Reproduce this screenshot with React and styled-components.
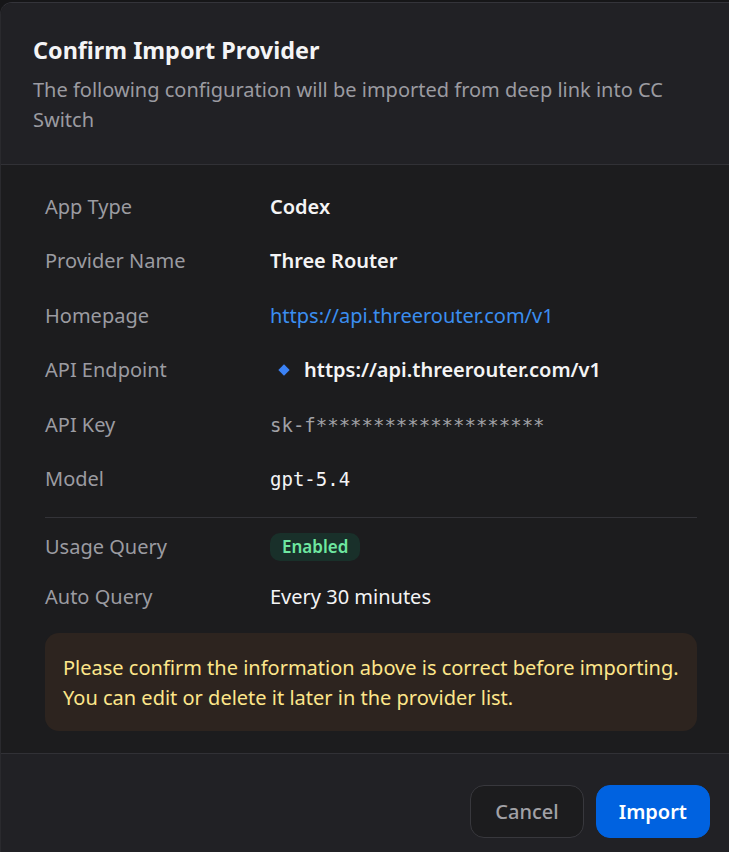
import React from "react"
import styled, { createGlobalStyle } from "styled-components"

const Global = createGlobalStyle`
  html, body {
    margin: 0;
    padding: 0;
    background: #161618;
    overflow: hidden;
  }
  * {
    box-sizing: border-box;
  }
`

const Dialog = styled.div`
  margin-top: 2px;
  width: 742px;
  border-top: 1px solid #34343a;
  border-left: 1px solid #2a2a2e;
  border-top-left-radius: 12px;
  background: #1c1c1e;
  font-family: "Noto Sans", "Open Sans", sans-serif;
  overflow: hidden;
`

const Header = styled.div`
  background: #212125;
  padding: 32px 32px 29px 32px;
  border-bottom: 1px solid #313136;
`

const Title = styled.h2`
  margin: 0;
  font-size: 23.4px;
  line-height: 30px;
  font-weight: 700;
  color: #f4f4f5;
`

const Subtitle = styled.p`
  margin: 10px 0 0 0;
  font-size: 20px;
  line-height: 30px;
  color: #9b9ba1;
  max-width: 640px;
`

const Body = styled.div`
  padding: 27px 45px 22px 44px;
`

const Rows = styled.div`
  display: grid;
  grid-template-columns: 225px 1fr;
  row-gap: ${p => p.$gap}px;
  align-items: center;
`

const Label = styled.div`
  font-size: 20px;
  line-height: 30px;
  color: #9b9ba1;
`

const Value = styled.div`
  font-size: 20px;
  line-height: 30px;
  color: ${p => p.$color || "#f4f4f5"};
  font-weight: ${p => (p.$bold ? 600 : 400)};
  display: flex;
  align-items: center;
`

const Link = styled.a`
  color: #3b8ef0;
  text-decoration: none;
`

const Mono = styled.span`
  font-family: "DejaVu Sans Mono", "Liberation Mono", monospace;
  font-size: 19px;
  color: ${p => p.$color || "#f4f4f5"};
`

const Diamond = styled.span`
  display: inline-block;
  width: 8px;
  height: 8px;
  background: #3b82f6;
  transform: rotate(45deg);
  margin: 0 16px 0 10px;
`

const Divider = styled.div`
  height: 1px;
  background: #333338;
  margin: 23px 0 14px 0;
`

const Badge = styled.span`
  display: inline-flex;
  align-items: center;
  height: 28px;
  padding: 0 12px;
  border-radius: 10px;
  background: #19302a;
  color: #6ee7a0;
  font-size: 17px;
  font-weight: 600;
`

const Warning = styled.div`
  margin-top: 21px;
  padding: 20px 18px 18px 18px;
  border-radius: 14px;
  background: #2d241f;
  color: #fde68a;
  font-size: 20px;
  line-height: 30px;
`

const Footer = styled.div`
  background: #212125;
  border-top: 1px solid #313136;
  padding: 31px 32px 40px 32px;
  display: flex;
  justify-content: flex-end;
  gap: 12px;
`

const Button = styled.button`
  height: 53px;
  padding: 0 ${p => (p.$primary ? 22 : 24)}px;
  border-radius: 14px;
  font-family: inherit;
  font-size: 20px;
  font-weight: ${p => (p.$primary ? 600 : 500)};
  border: 1px solid ${p => (p.$primary ? "#0062e0" : "#38383d")};
  background: ${p => (p.$primary ? "#0062e0" : "#1c1c1e")};
  color: ${p => (p.$primary ? "#ffffff" : "#a1a1a6")};
  cursor: pointer;
`

const App = () => (
  <>
    <Global />
    <Dialog>
      <Header>
        <Title>Confirm Import Provider</Title>
        <Subtitle>
          The following configuration will be imported from deep link into CC Switch
        </Subtitle>
      </Header>
      <Body>
        <Rows $gap={24.4}>
          <Label>App Type</Label>
          <Value $bold>Codex</Value>
          <Label>Provider Name</Label>
          <Value $bold>Three Router</Value>
          <Label>Homepage</Label>
          <Value>
            <Link href="#">https://api.threerouter.com/v1</Link>
          </Value>
          <Label>API Endpoint</Label>
          <Value $bold>
            <Diamond />
            https://api.threerouter.com/v1
          </Value>
          <Label>API Key</Label>
          <Value>
            <Mono $color="#a1a1a6">sk-f********************</Mono>
          </Value>
          <Label>Model</Label>
          <Value>
            <Mono>gpt-5.4</Mono>
          </Value>
        </Rows>
        <Divider />
        <Rows $gap={20}>
          <Label>Usage Query</Label>
          <Value>
            <Badge>Enabled</Badge>
          </Value>
          <Label>Auto Query</Label>
          <Value>Every 30 minutes</Value>
        </Rows>
        <Warning>
          Please confirm the information above is correct before importing.
          <br />
          You can edit or delete it later in the provider list.
        </Warning>
      </Body>
      <Footer>
        <Button>Cancel</Button>
        <Button $primary>Import</Button>
      </Footer>
    </Dialog>
  </>
)

export default App
